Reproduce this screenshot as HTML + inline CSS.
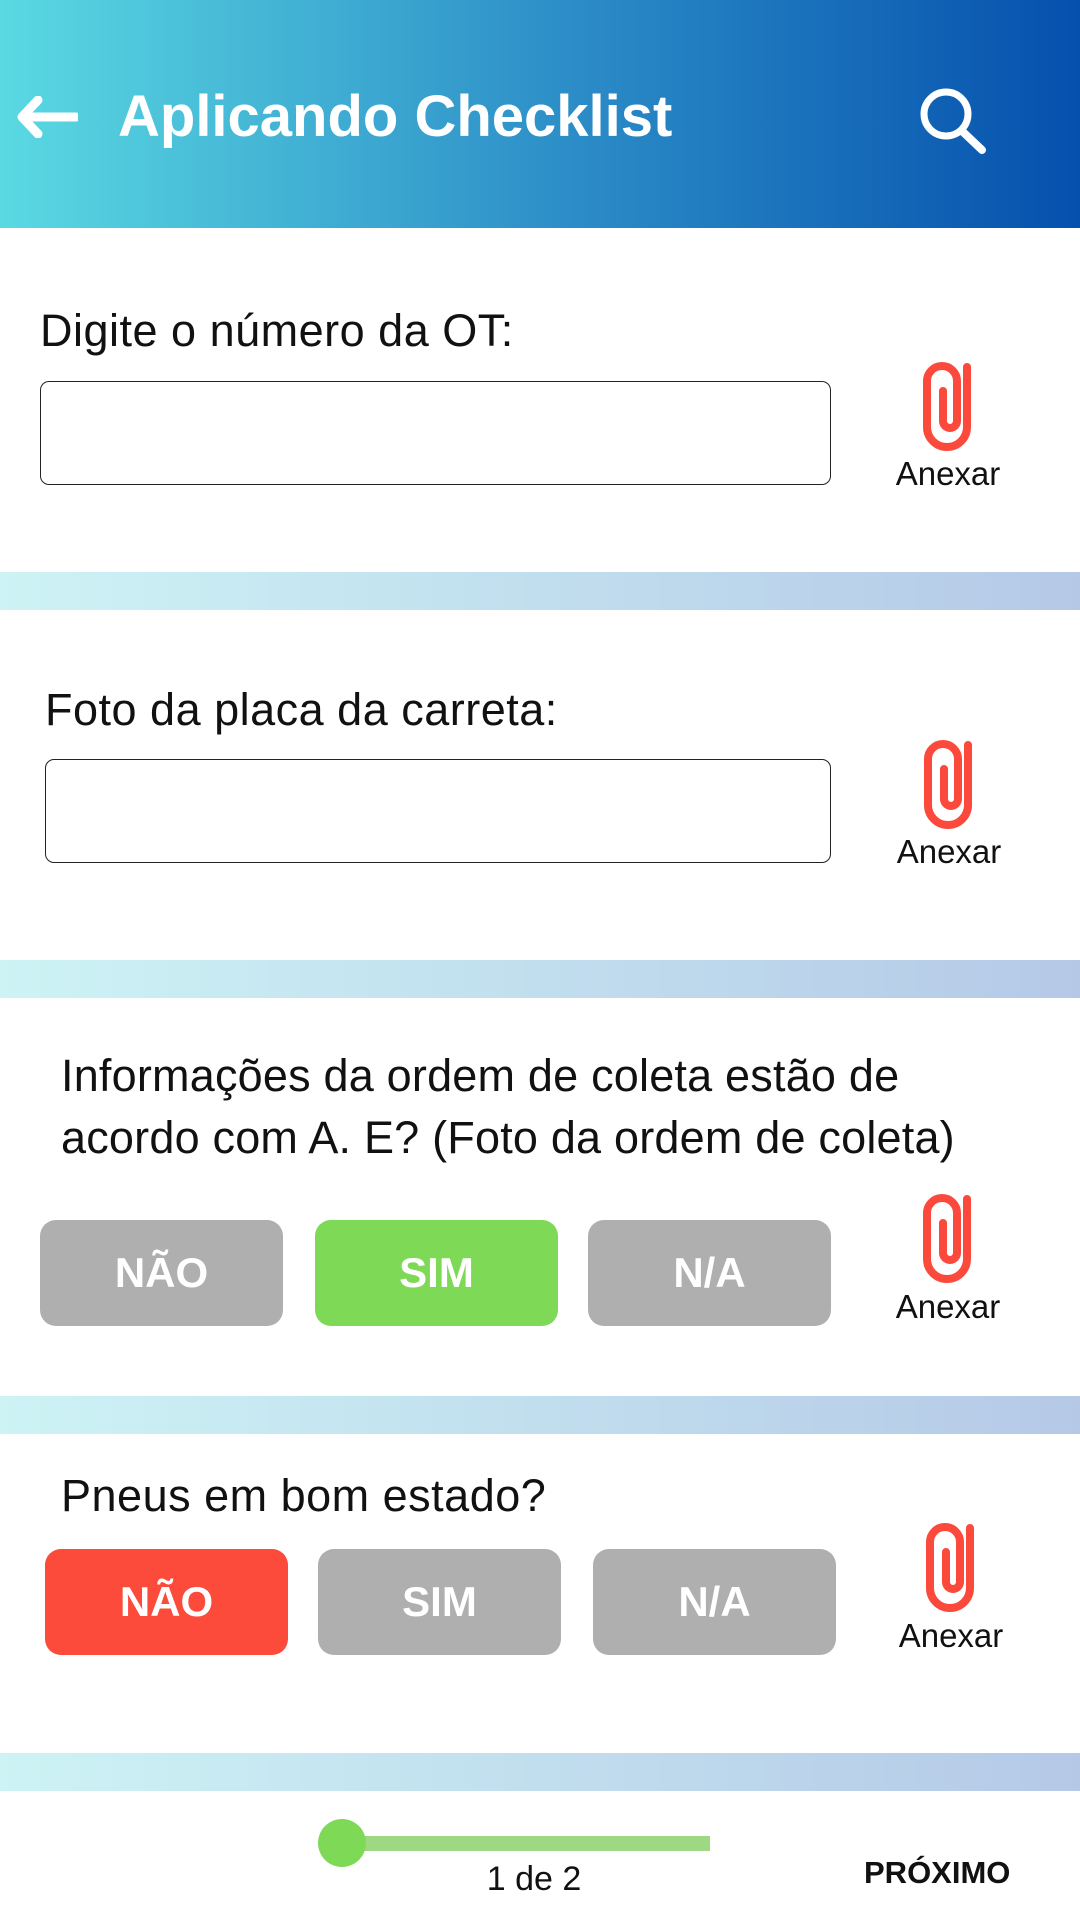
<!DOCTYPE html>
<html><head><meta charset="utf-8"><style>
*{margin:0;padding:0;box-sizing:border-box}
body{width:1080px;height:1920px;position:relative;background:#fff;font-family:"Liberation Sans","DejaVu Sans",sans-serif;overflow:hidden;color:#111}
.a{position:absolute}
.hdr{left:0;top:0;width:1080px;height:228px;background:linear-gradient(90deg,#5ad9e2,#2a8ac6 55%,#0550ad)}
.band{left:0;width:1080px;height:38px;background:linear-gradient(90deg,#cdf3f5,#b5c9e7)}
.lbl{font-size:45px;line-height:50px;white-space:nowrap;letter-spacing:0.5px}
.inp{border:1.5px solid #222;border-radius:9px}
.btn{height:106px;width:243px;border-radius:16px;color:#fff;font-weight:bold;font-size:42px;display:flex;align-items:center;justify-content:center;background:#b0afaf}
.anx{font-size:33px;width:130px;text-align:center}
</style></head><body>
<div class="a hdr"></div>
<svg class="a" style="left:14px;top:96px" width="64" height="42" viewBox="0 0 64 42"><path d="M62 21H8M24 4 8 21 24 38" stroke="#fff" stroke-width="9" fill="none" stroke-linecap="round" stroke-linejoin="round"/></svg>
<div class="a" style="left:118px;top:85px;font-size:58px;font-weight:bold;color:#fff;line-height:64px">Aplicando Checklist</div>
<svg class="a" style="left:918px;top:86px" width="72" height="70" viewBox="0 0 72 70"><circle cx="28" cy="28" r="22" stroke="#fff" stroke-width="7" fill="none"/><path d="M44 45 64 64" stroke="#fff" stroke-width="8" stroke-linecap="round"/></svg>

<div class="a lbl" style="left:40px;top:306px">Digite o número da OT:</div>
<div class="a inp" style="left:40px;top:381px;width:791px;height:104px"></div>

<div class="a band" style="top:572px"></div>
<div class="a lbl" style="left:45px;top:685px">Foto da placa da carreta:</div>
<div class="a inp" style="left:45px;top:759px;width:786px;height:104px"></div>

<div class="a band" style="top:960px"></div>
<div class="a lbl" style="left:61px;top:1045px;line-height:62px;font-size:45px;letter-spacing:0.2px">Informações da ordem de coleta estão de<br>acordo com A. E? (Foto da ordem de coleta)</div>
<div class="a btn" style="left:40px;top:1220px">NÃO</div>
<div class="a btn" style="left:315px;top:1220px;background:#7ed957">SIM</div>
<div class="a btn" style="left:588px;top:1220px">N/A</div>

<div class="a band" style="top:1396px"></div>
<div class="a lbl" style="left:61px;top:1471px">Pneus em bom estado?</div>
<div class="a btn" style="left:45px;top:1549px;background:#fc4a3b">NÃO</div>
<div class="a btn" style="left:318px;top:1549px">SIM</div>
<div class="a btn" style="left:593px;top:1549px">N/A</div>

<div class="a band" style="top:1753px"></div>

<svg class="a" style="left:921px;top:357px" width="54" height="96" viewBox="0 0 54 96"><path d="M46 10V70A20 20 0 0 1 6 70V24A15 15 0 0 1 36 24V64A7 7 0 0 1 22 64V34" stroke="#fb4a3c" stroke-width="8" fill="none" stroke-linecap="round"/></svg>
<div class="a anx" style="left:883px;top:455px">Anexar</div>
<svg class="a" style="left:922px;top:735px" width="54" height="96" viewBox="0 0 54 96"><path d="M46 10V70A20 20 0 0 1 6 70V24A15 15 0 0 1 36 24V64A7 7 0 0 1 22 64V34" stroke="#fb4a3c" stroke-width="8" fill="none" stroke-linecap="round"/></svg>
<div class="a anx" style="left:884px;top:833px">Anexar</div>
<svg class="a" style="left:921px;top:1189px" width="54" height="96" viewBox="0 0 54 96"><path d="M46 10V70A20 20 0 0 1 6 70V24A15 15 0 0 1 36 24V64A7 7 0 0 1 22 64V34" stroke="#fb4a3c" stroke-width="8" fill="none" stroke-linecap="round"/></svg>
<div class="a anx" style="left:883px;top:1288px">Anexar</div>
<svg class="a" style="left:924px;top:1518px" width="54" height="96" viewBox="0 0 54 96"><path d="M46 10V70A20 20 0 0 1 6 70V24A15 15 0 0 1 36 24V64A7 7 0 0 1 22 64V34" stroke="#fb4a3c" stroke-width="8" fill="none" stroke-linecap="round"/></svg>
<div class="a anx" style="left:886px;top:1617px">Anexar</div>

<div class="a" style="left:342px;top:1836px;width:368px;height:15px;background:#9fd883"></div>
<div class="a" style="left:318px;top:1819px;width:48px;height:48px;border-radius:50%;background:#7ed957"></div>
<div class="a" style="left:454px;top:1860px;width:160px;text-align:center;font-size:34px">1 de 2</div>
<div class="a" style="left:864px;top:1855px;font-size:31px;font-weight:bold">PRÓXIMO</div>
</body></html>
